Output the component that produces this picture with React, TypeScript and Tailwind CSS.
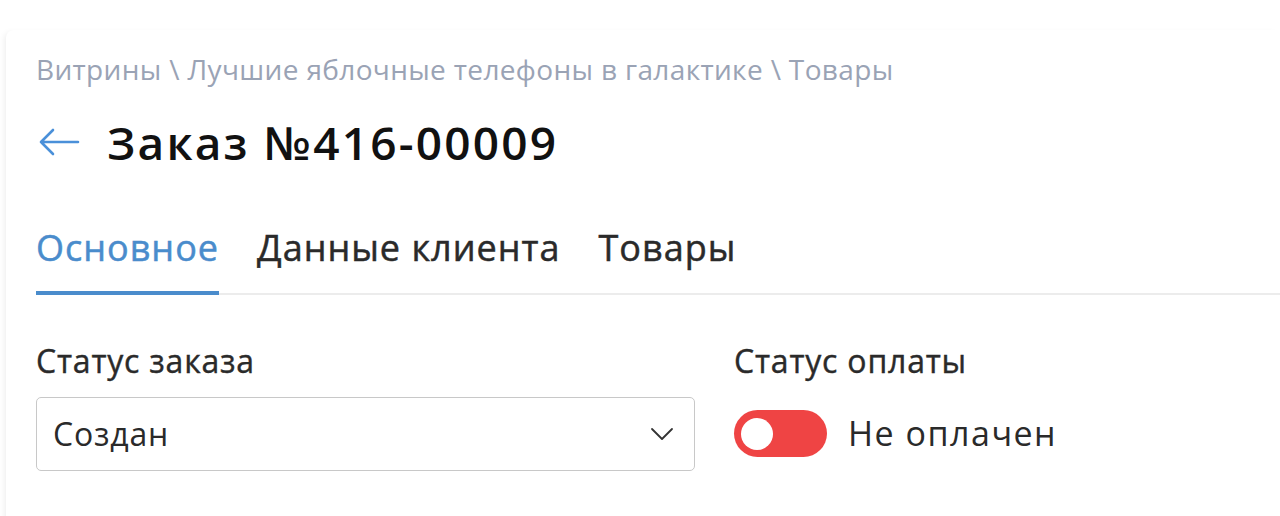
import React from "react";

export default function App() {
  const font = { fontFamily: '"Open Sans", "Noto Sans", sans-serif' };
  return (
    <div className="w-[1280px] h-[516px] bg-white overflow-hidden" style={font}>
      <div className="mt-[30px] ml-[6px] h-[560px] rounded-tl-[8px] bg-white shadow-[-4px_0_6px_-3px_rgba(0,0,0,0.08)] pl-[30px] pt-[22px]">
        <div className="text-[28px] leading-[34px] text-[#9aa3b5] tracking-[0.35px]">
          Витрины \ Лучшие яблочные телефоны в галактике \ Товары
        </div>
        <div className="flex items-center mt-[34px] h-[44px]">
          <svg width="42" height="30" viewBox="0 0 42 30" className="ml-[2px]" fill="none" stroke="#4a90d9" strokeWidth="2.6" strokeLinecap="round" strokeLinejoin="round">
            <path d="M40 15H3M15 3L3 15l12 12" />
          </svg>
          <div className="ml-[27px] text-[46px] font-semibold text-[#111] leading-[44px] tracking-[2.2px]">Заказ №416-00009</div>
        </div>
        <div className="mt-[64px] border-b-2 border-[#ececec] flex gap-[38px]">
          <div className="pb-[23px] border-b-[4px] border-[#4a8ccc] -mb-[2px] text-[36px] leading-[40px] tracking-[1px] [-webkit-text-stroke:0.5px_#4a8ccc] text-[#4a8ccc]">Основное</div>
          <div className="pb-[23px] text-[36px] leading-[40px] tracking-[1px] [-webkit-text-stroke:0.5px_#2a2a2a] text-[#2a2a2a]">Данные клиента</div>
          <div className="pb-[23px] text-[36px] leading-[40px] tracking-[1px] [-webkit-text-stroke:0.5px_#2a2a2a] text-[#2a2a2a]">Товары</div>
        </div>
        <div className="flex mt-[48px]">
          <div className="w-[659px]">
            <div className="text-[32px] leading-[36px] tracking-[0.8px] [-webkit-text-stroke:0.4px_#2a2a2a] text-[#2a2a2a]">Статус заказа</div>
            <div className="mt-[18px] h-[74px] border border-[#c8c8c8] rounded-[5px] flex items-center justify-between pl-[16px] pr-[20px]">
              <span className="text-[32px] tracking-[0.8px] text-[#2a2a2a]">Создан</span>
              <svg width="24" height="14" viewBox="0 0 24 14" fill="none" stroke="#333" strokeWidth="1.8" strokeLinecap="round" strokeLinejoin="round">
                <path d="M2 2l10 10 10-10" />
              </svg>
            </div>
          </div>
          <div className="ml-[39px]">
            <div className="text-[32px] leading-[36px] tracking-[0.8px] [-webkit-text-stroke:0.4px_#2a2a2a] text-[#2a2a2a]">Статус оплаты</div>
            <div className="mt-[29px] flex items-center">
              <div className="w-[93px] h-[47px] rounded-full bg-[#ef4444] flex items-center pl-[7px]">
                <div className="w-[32px] h-[32px] rounded-full bg-white" />
              </div>
              <span className="ml-[21px] text-[34px] tracking-[1.5px] text-[#2a2a2a]">Не оплачен</span>
            </div>
          </div>
        </div>
      </div>
    </div>
  );
}
